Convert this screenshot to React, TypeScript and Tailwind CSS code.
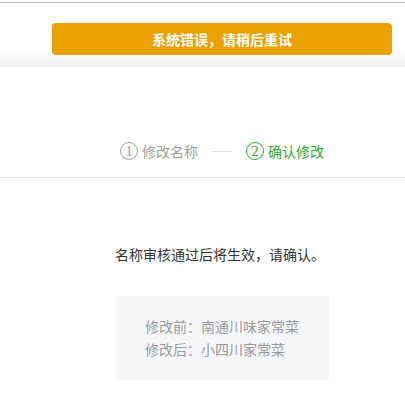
const font = { fontFamily: '"Noto Sans CJK SC", "Noto Sans", sans-serif' };

function StepBadge({ n, active }: { n: number; active?: boolean }) {
  return (
    <span
      className={
        "flex h-[18px] w-[18px] items-center justify-center rounded-full border font-['Liberation_Serif',serif] text-[15px] leading-none " +
        (active ? "border-[#2aa83a] text-[#2aa83a]" : "border-[#a0a0a0] text-[#a0a0a0]")
      }
    >
      {n}
    </span>
  );
}

export default function App() {
  return (
    <div className="w-full overflow-hidden bg-white" style={font}>
      <div className="w-[444px]">
        {/* top toast area */}
        <div className="pt-[2px]">
          <div className="h-px bg-[#b8b8b8]" />
          <div className="bg-gradient-to-b from-white from-[70%] to-[#eef0f2] pt-[20px] pb-[12px]">
            <div className="mx-auto flex h-[32px] w-[340px] items-center justify-center rounded-[4px] bg-[#eba100] text-[14px] font-bold text-white">
              系统错误，请稍后重试
            </div>
          </div>
        </div>

        {/* steps */}
        <div className="flex h-[110px] items-end justify-center pb-[16px]">
          <div className="flex items-center text-[14px] leading-[20px]">
            <div className="flex items-center gap-[4px] text-[#a0a0a0]">
              <StepBadge n={1} />
              <span>修改名称</span>
            </div>
            <div className="mx-[14px] h-px w-[20px] bg-[#dddddd]" />
            <div className="flex items-center gap-[4px] text-[#2aa83a]">
              <StepBadge n={2} active />
              <span>确认修改</span>
            </div>
          </div>
        </div>
        <div className="h-px w-[405px] bg-[#e3e3e3]" />

        {/* body */}
        <div className="mx-auto w-[214px] pt-[66px]">
          <p className="whitespace-nowrap text-[14px] leading-[20px] text-[#333333]">
            名称审核通过后将生效，请确认。
          </p>
          <div className="mt-[32px] h-[84px] bg-[#f5f6f8] py-[19px] pl-[30px] text-[14px] leading-[23px] text-[#9a9a9a]">
            <div>修改前：南通川味家常菜</div>
            <div>修改后：小四川家常菜</div>
          </div>
        </div>
        <div className="h-[34px]" />
      </div>
    </div>
  );
}
